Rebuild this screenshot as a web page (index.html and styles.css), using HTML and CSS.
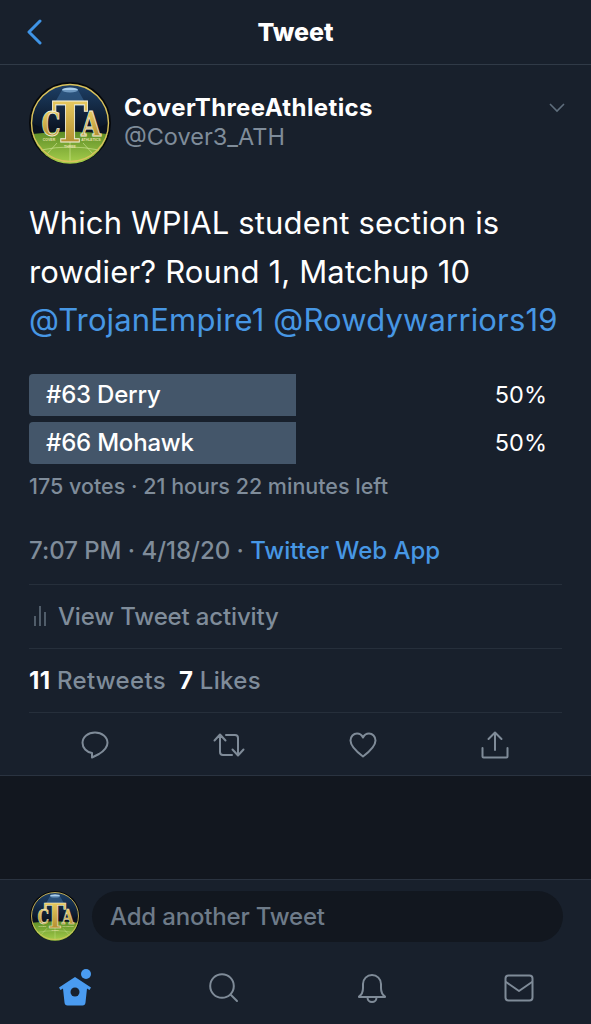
FILE: index.html
```html
<!DOCTYPE html>
<html lang="en">
<head>
  <meta charset="utf-8"/>
  <meta name="viewport" content="width=device-width, initial-scale=1.0"/>
  <title>Tweet</title>
  <link rel="stylesheet" href="styles.css">
</head>
<body>
  <svg class="defs" width="0" height="0">
    <defs>
      <symbol id="cta" viewBox="0 0 82 82">
        <circle cx="41" cy="41" r="41" fill="#05070b"/>
        <circle cx="41" cy="41" r="38.5" fill="url(#sky)"/>
        <path d="M2.500 41 Q41 62 79.500 41 A38.500 38.500 0 0 1 2.500 41Z" fill="#0a1220"/>
        <path d="M3.500 52 Q41 47 78.500 52 A38.500 38.500 0 0 1 3.500 52Z" fill="url(#grass)"/>
        <path d="M41 60V79M28 61L18 72M54 61L64 72M12 68Q41 62 70 68" stroke="#d6ea9c" stroke-width=".6" fill="none"/>
        <circle cx="41" cy="41" r="38.5" fill="none" stroke="#d9c25c" stroke-width="1.4"/>
        <ellipse cx="41" cy="8" rx="8" ry="2.500" fill="#a9cdea"/>
        <path d="M33 8L24 24H58L49 8Z" fill="#3d6c9a" opacity=".55"/>
        <text class="logo-side" x="22" y="54" text-anchor="middle" textLength="19" lengthAdjust="spacingAndGlyphs">C</text>
        <text class="logo-side" x="62" y="54" text-anchor="middle" textLength="20" lengthAdjust="spacingAndGlyphs">A</text>
        <text class="logo-t" x="41" y="60" text-anchor="middle" textLength="36" lengthAdjust="spacingAndGlyphs">T</text>
        <text class="logo-small" x="20" y="59" text-anchor="middle">COVER</text>
        <text class="logo-small" x="62" y="59" text-anchor="middle">ATHLETICS</text>
        <text class="logo-small" x="41" y="66" text-anchor="middle">THREE</text>
      </symbol>
      <linearGradient id="sky" x1="0" y1="0" x2="0" y2="1">
        <stop offset="0" stop-color="#1d3f66"/>
        <stop offset=".6" stop-color="#0a1220"/>
      </linearGradient>
      <linearGradient id="grass" x1="0" y1="0" x2="0" y2="1">
        <stop offset="0" stop-color="#5d8c26"/>
        <stop offset="1" stop-color="#a6cf4c"/>
      </linearGradient>
      <linearGradient id="gold" x1="0" y1="0" x2="0" y2="1">
        <stop offset="0" stop-color="#f5d96c"/>
        <stop offset="1" stop-color="#a67f24"/>
      </linearGradient>
    </defs>
  </svg>

  <header class="topbar">
    <svg class="back" width="16" height="26" viewBox="0 0 16 26"><path d="M14 2L3 13l11 11" fill="none" stroke="#3f94e6" stroke-width="3" stroke-linecap="round" stroke-linejoin="round"/></svg>
    <h1>Tweet</h1>
  </header>

  <main class="tweet">
    <div class="author">
      <svg class="avatar" width="82" height="82"><use href="#cta"/></svg>
      <div class="names">
        <div class="name">CoverThreeAthletics</div>
        <div class="handle">@Cover3_ATH</div>
      </div>
      <svg class="caret" width="16" height="10" viewBox="0 0 16 10"><path d="M1 1l7 7 7-7" fill="none" stroke="#5f6e7d" stroke-width="1.6"/></svg>
    </div>

    <p class="text">Which WPIAL student section is rowdier? Round 1, Matchup 10 <a>@TrojanEmpire1</a> <a>@Rowdywarriors19</a></p>

    <div class="poll">
      <div class="option"><div class="bar">#63 Derry</div><span class="pct">50%</span></div>
      <div class="option"><div class="bar">#66 Mohawk</div><span class="pct">50%</span></div>
    </div>
    <div class="poll-meta">175 votes · 21 hours 22 minutes left</div>

    <div class="date">7:07 PM · 4/18/20 · <a>Twitter Web App</a></div>

    <div class="row activity">
      <svg width="14" height="22" viewBox="0 0 14 22"><path d="M2 11v10M7 1v20M12 7v14" stroke="#6f7d8b" stroke-width="1.3" fill="none"/></svg>
      <span>View Tweet activity</span>
    </div>
    <div class="row counts">
      <span><b>11</b> Retweets</span>
      <span><b>7</b> Likes</span>
    </div>
    <div class="row actions">
      <svg width="28" height="28" viewBox="0 0 28 28"><path d="M11 26.500V22C5.500 21 1.500 17 1.500 11.700 1.500 6 7 1.500 14 1.500S26.500 6 26.500 11.700C26.500 17 22 20.500 18 23z" class="ico"/></svg>
      <svg width="32" height="28" viewBox="0 0 32 28"><path d="M1.500 9.500L7 3.500l5.500 6M7 4v17q0 3 3 3h9M13 4h9q3 0 3 3v17M19.500 18.500l5.500 6 5.500-6" class="ico"/></svg>
      <svg width="28" height="28" viewBox="0 0 28 28"><path d="M14 25.500C6 19.500 1.500 15 1.500 9.500 1.500 5.500 4.500 2.500 8 2.500c2.600 0 4.800 1.400 6 4 1.200-2.600 3.400-4 6-4 3.500 0 6.500 3 6.500 7 0 5.500-4.500 10-12.500 16z" class="ico"/></svg>
      <svg width="28" height="28" viewBox="0 0 28 28"><path d="M14 19V2M7.500 8L14 1.500 20.500 8M1.500 17v8.500q0 1 1 1h23q1 0 1-1V17" class="ico"/></svg>
    </div>
  </main>

  <div class="gap"></div>

  <section class="composer">
    <svg class="avatar-small" width="50" height="50"><use href="#cta"/></svg>
    <div class="pill">Add another Tweet</div>
  </section>

  <nav class="tabs">
    <svg width="34" height="38" viewBox="0 0 34 38"><circle cx="28" cy="5" r="5" fill="#4a9bf0"/><path d="M17 8L1 18.500l1.500 2.500 2.500-1.500 1.500 14q.3 3 3 3h15q2.700 0 3-3l1.500-14 2.500 1.500 1.500-2.500z" fill="#4a9bf0"/><circle cx="17" cy="23" r="4.500" fill="#18202c"/></svg>
    <svg width="30" height="30" viewBox="0 0 30 30"><circle cx="13" cy="13" r="11.800" fill="none" stroke="#7f8b98" stroke-width="2"/><path d="M22 22l6 6" stroke="#7f8b98" stroke-width="2" stroke-linecap="round"/></svg>
    <svg width="30" height="30" viewBox="0 0 30 30"><path d="M2 23.500c3-2 4-4.500 4-8.500v-4c0-5 4-9 9-9s9 4 9 9v4c0 4 1 6.500 4 8.500v.5H2zM10.500 24.500a4.500 4.500 0 0 0 9 0" class="ico"/></svg>
    <svg width="30" height="28" viewBox="0 0 30 28"><rect x="1.500" y="1.500" width="27" height="25" rx="3" class="ico"/><path d="M2 8l13 9 13-9" class="ico"/></svg>
  </nav>
</body>
</html>
```

FILE: styles.css
```css
* {
  box-sizing: border-box;
}
html, body {
  margin: 0;
  height: 1024px;
  overflow: hidden;
}
body {
  display: flex;
  flex-direction: column;
  background: #18202c;
  color: #fff;
  font-family: Inter, "Noto Sans", sans-serif;
}
body > * {
  flex: none;
}
a {
  color: #4797e4;
}
.defs {
  position: absolute;
}
.ico {
  fill: none;
  stroke: #7f8b98;
  stroke-width: 2;
  stroke-linecap: round;
  stroke-linejoin: round;
}
.logo-t {
  font: bold 56px "DejaVu Serif", serif;
  fill: url(#gold);
  stroke: #f3efd8;
  stroke-width: 1;
}
.logo-side {
  font: bold 33px "DejaVu Serif", serif;
  fill: url(#gold);
  stroke: #f3efd8;
  stroke-width: .8;
}
.logo-small {
  font: bold 3.500px "Liberation Sans", sans-serif;
  fill: #e6e2a8;
}

.topbar {
  position: relative;
  height: 65px;
  display: flex;
  align-items: center;
  justify-content: center;
  border-bottom: 1px solid #303a47;
}
.topbar h1 {
  margin: 0;
  font-size: 25px;
  font-weight: 800;
}
.back {
  position: absolute;
  left: 26px;
  top: 19px;
}

.tweet {
  height: 711px;
  padding: 17px 29px 0;
  border-bottom: 1px solid #2a3340;
}
.author {
  display: flex;
  align-items: center;
  gap: 13px;
}
.avatar {
  flex: none;
}
.names {
  flex: 1;
  margin-top: -2px;
}
.name {
  font-size: 24px;
  font-weight: 700;
  line-height: 29px;
  letter-spacing: .4px;
}
.handle {
  font-size: 23.500px;
  line-height: 30px;
  color: #7f8c9a;
}
.caret {
  margin: -30px -3px 0 0;
}

.text {
  margin: 35px 0 0;
  font-size: 31px;
  line-height: 48.500px;
  letter-spacing: .15px;
  width: 535px;
}

.poll {
  margin-top: 29px;
  display: flex;
  flex-direction: column;
  gap: 6px;
}
.option {
  display: flex;
  align-items: center;
  justify-content: space-between;
  padding-right: 15px;
  font-size: 24px;
  font-weight: 500;
}
.bar {
  width: 267px;
  height: 42px;
  padding-left: 17px;
  line-height: 42px;
  background: #44566a;
  border-radius: 4px 0 0 4px;
  letter-spacing: -.2px;
}
.pct {
  font-size: 23.500px;
  font-weight: 400;
}
.poll-meta {
  margin-top: 10px;
  font-size: 21.500px;
  font-weight: 500;
  line-height: 24px;
  color: #7f8c9a;
}
.date {
  margin-top: 39px;
  font-size: 24px;
  font-weight: 500;
  line-height: 28px;
  color: #7f8c9a;
  letter-spacing: -.02px;
}

.row {
  display: flex;
  align-items: center;
  height: 64px;
  border-top: 1px solid #262f3b;
  font-size: 24px;
  font-weight: 500;
  color: #7f8c9a;
}
.activity {
  margin-top: 19px;
  padding-left: 4px;
  gap: 11px;
  letter-spacing: -.15px;
}
.counts {
  gap: 13px;
  letter-spacing: .3px;
}
.counts b {
  color: #fff;
}
.actions {
  justify-content: space-between;
  height: 63px;
  padding: 3px 53px 0 52px;
}

.gap {
  height: 103px;
  background: #12171f;
}

.composer {
  height: 76px;
  padding: 0 28px 4px 30px;
  display: flex;
  align-items: center;
  gap: 12px;
  border-top: 1px solid #2a3340;
}
.pill {
  flex: 1;
  height: 51px;
  padding-left: 18px;
  line-height: 51px;
  margin-top: 1px;
  border-radius: 26px;
  background: #12171f;
  font-size: 24px;
  font-weight: 500;
  color: #6e7b89;
  letter-spacing: -.18px;
}

.tabs {
  height: 69px;
  display: flex;
  align-items: center;
  justify-content: space-between;
  padding: 0 57px 3px 58px;
}
```
